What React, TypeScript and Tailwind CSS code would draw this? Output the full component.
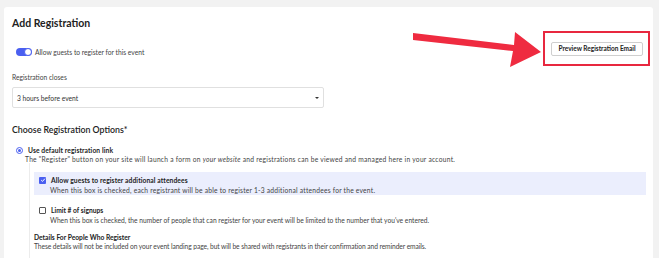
import React from "react";

export default function App() {
  return (
    <div
      className="relative w-[659px] h-[258px] overflow-hidden bg-[#f2f2f2] pt-[7px] pl-[4px] pr-[6px]"
      style={{ fontFamily: "Lato, 'Noto Sans', sans-serif" }}
    >
      <div className="h-[260px] bg-white rounded-t-[3px] pl-[8px] pr-[10px] pt-[9px] text-[#333]">
        <h1 className="text-[10.5px] leading-[14px] font-bold text-[#222]">Add Registration</h1>

        <div className="mt-[12px] flex h-[14px] items-end justify-between">
          <div className="flex h-[8px] items-center gap-[3px] pl-[4px]">
            <div className="relative h-[8px] w-[16px] rounded-full bg-[#4a5ff0]">
              <div className="absolute right-0 top-0 h-[8px] w-[8px] rounded-full border border-[#4a5ff0] bg-white" />
            </div>
            <span className="text-[6.7px] leading-[8px] text-[#444]">Allow guests to register for this event</span>
          </div>
          <button className="flex h-[14px] w-[92px] items-center justify-center rounded-[2px] border border-[#cfcfcf] bg-white text-[6.5px] font-bold text-[#222]">
            Preview Registration Email
          </button>
        </div>

        <div className="mt-[17px] text-[6.7px] leading-[8px] text-[#444]">Registration closes</div>
        <div className="mt-[6px] flex h-[21px] w-[312px] items-center justify-between rounded-[2px] border border-[#e0e0e0] pl-[4px] pr-[4px]">
          <span className="text-[6.7px] leading-[8px] text-[#333]">3 hours before event</span>
          <span className="h-0 w-0 border-l-[2px] border-r-[2px] border-t-[2.5px] border-l-transparent border-r-transparent border-t-[#333]" />
        </div>

        <div className="mt-[17px] text-[8.8px] leading-[10px] font-semibold text-[#222]">Choose Registration Options*</div>

        <div className="mt-[11px] flex h-[8px] items-center gap-[5px] pl-[4px]">
          <div className="flex h-[7px] w-[7px] items-center justify-center rounded-full border border-[#4a5ff0]">
            <div className="h-[3px] w-[3px] rounded-full bg-[#4a5ff0]" />
          </div>
          <span className="text-[6.7px] leading-[8px] font-bold tracking-[0.1px] text-[#222]">Use default registration link</span>
        </div>
        <div className="mt-[1px] pl-[13px] text-[6.7px] leading-[8px] tracking-[0.25px] text-[#444]">
          The "Register" button on your site will launch a form on <i>your website</i> and registrations can be viewed and managed here in your account.
        </div>

        <div className="ml-[17px] border-l border-[#ececec] pl-[4px] pt-[9px] pb-[20px]">
          <div className="w-[612px] bg-[#ebeefd] pl-[5px] pt-[4px] pb-[1px]">
            <div className="flex h-[8px] items-center gap-[5px]">
              <div className="flex h-[7px] w-[7px] items-center justify-center rounded-[1px] bg-[#4a5ff0]">
                <svg viewBox="0 0 10 10" className="h-[6px] w-[6px]">
                  <path d="M2 5.2 L4.2 7.3 L8.2 2.8" fill="none" stroke="white" strokeWidth="1.6" />
                </svg>
              </div>
              <span className="text-[6.7px] leading-[8px] font-bold tracking-[0.1px] text-[#222]">Allow guests to register additional attendees</span>
            </div>
            <div className="mt-[2px] pl-[11px] text-[6.7px] leading-[8px] tracking-[0.22px] text-[#444]">
              When this box is checked, each registrant will be able to register 1-3 additional attendees for the event.
            </div>
          </div>

          <div className="mt-[7px] w-[612px] pl-[5px] pt-[4px] pb-[1px]">
            <div className="flex h-[8px] items-center gap-[5px]">
              <div className="h-[7px] w-[7px] rounded-[1px] border border-[#555] bg-white" />
              <span className="text-[6.7px] leading-[8px] font-bold text-[#222]">Limit # of signups</span>
            </div>
            <div className="mt-[2px] pl-[11px] text-[6.7px] leading-[8px] text-[#444]">
              When this box is checked, the number of people that can register for your event will be limited to the number that you've entered.
            </div>
          </div>

          <div className="mt-[8px] text-[6.7px] leading-[8px] font-bold text-[#222]">Details For People Who Register</div>
          <div className="mt-[1px] text-[6.7px] leading-[8px] tracking-[-0.08px] text-[#444]">
            These details will not be included on your event landing page, but will be shared with registrants in their confirmation and reminder emails.
          </div>
        </div>
      </div>

      <div className="absolute left-[543px] top-[31px] h-[35px] w-[107px] border-2 border-[#e8283f]" />
      <svg className="pointer-events-none absolute left-0 top-0" width="659" height="258" viewBox="0 0 659 258">
        <polygon points="413,33 514,45 515,32 541,52 510,67 513,51 413,40" fill="#ef2b40" />
      </svg>
    </div>
  );
}
